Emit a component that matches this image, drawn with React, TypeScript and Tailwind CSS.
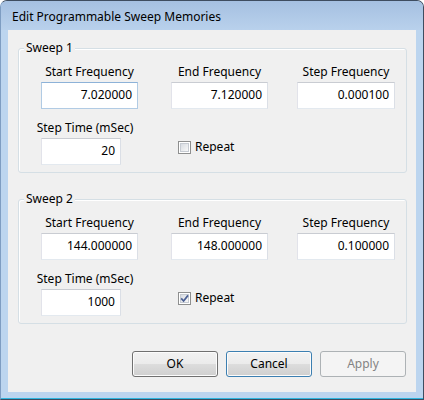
import { clsx as cn } from "clsx";

const ui = "font-['Noto_Sans','DejaVu_Sans',sans-serif] text-[12px] text-black";

function TextBox({ value, className, hot = false }: { value: string; className?: string; hot?: boolean }) {
  return (
    <div
      className={cn(
        "flex h-[27px] items-center justify-end border bg-white pr-[5px] pb-[1px] leading-[16px]",
        hot
          ? "border-[#b1cbe4] border-t-[#8db2d8]"
          : "border-[#e3e9ef] border-t-[#c9ccd2] border-l-[#e2e3ea] border-r-[#dbdfe6]",
        className
      )}
    >
      {value}
    </div>
  );
}

function CheckBox({ label, checked = false }: { label: string; checked?: boolean }) {
  return (
    <div className="flex items-center leading-[16px]">
      <div className="h-[13px] w-[13px] border border-[#8e8f8f] bg-white p-px">
        <div className="relative h-full w-full border border-[#c6cbd2] bg-linear-to-br from-[#d8dce2] to-[#f8f8f8]">
          {checked && (
            <svg viewBox="0 0 9 9" className="absolute -left-px -top-px h-[9px] w-[9px]">
              <path d="M1.2 4.4 L3.6 7 L8 1.4" fill="none" stroke="#4a5f93" strokeWidth="1.7" />
            </svg>
          )}
        </div>
      </div>
      <span className="ml-[4px]">{label}</span>
    </div>
  );
}

function Field({ label, value, className, hot }: { label: string; value: string; className?: string; hot?: boolean }) {
  return (
    <div className={className}>
      <div className="text-center leading-[16px]">{label}</div>
      <TextBox value={value} hot={hot} className="mt-[2px]" />
    </div>
  );
}

function Sweep({
  title,
  start,
  end,
  step,
  time,
  repeat,
  hot,
  className,
}: {
  title: string;
  start: string;
  end: string;
  step: string;
  time: string;
  repeat: boolean;
  hot?: boolean;
  className?: string;
}) {
  return (
    <div className={cn("relative rounded-[3px] border border-[#d5dfe5] pt-[15px] pb-[7px] shadow-[inset_1px_1px_0_#fff]", className)}>
      <span className="absolute -top-[9px] left-[5px] bg-[#f0f0f0] px-[2px] leading-[16px]">{title}</span>
      <div className="flex">
        <Field label="Start Frequency" value={start} hot={hot} className="ml-[22px] w-[97px]" />
        <Field label="End Frequency" value={end} className="ml-[33px] w-[97px]" />
        <Field label="Step Frequency" value={step} className="ml-[29px] w-[98px]" />
      </div>
      <div className="mt-[11px] flex items-start">
        <div className="ml-[14px] w-[104px]">
          <div className="text-center leading-[16px]">Step Time (mSec)</div>
          <TextBox value={time} className="ml-[8px] mt-[2px] w-[80px]" />
        </div>
        <div className="ml-[41px] mt-[19px]">
          <CheckBox label="Repeat" checked={repeat} />
        </div>
      </div>
    </div>
  );
}

function Button({ children, variant = "normal" }: { children: React.ReactNode; variant?: "normal" | "default" | "disabled" }) {
  return (
    <button
      type="button"
      className={cn(
        "h-[26px] w-[86px] rounded-[3px] border leading-[16px]",
        variant === "disabled"
          ? "border-[#adb2b5] bg-[#f4f4f4] text-[#838383]"
          : "bg-[linear-gradient(to_bottom,#f2f2f2_0%,#ebebeb_50%,#dddddd_50%,#cfcfcf_100%)] shadow-[inset_0_0_0_1px_#fcfcfc]",
        variant === "normal" && "border-[#707070]",
        variant === "default" && "border-[#3c7fb1] shadow-[inset_0_0_0_1px_#48d5fd]"
      )}
    >
      {children}
    </button>
  );
}

export default function App() {
  return (
    <div className={cn("h-[400px] w-[424px] overflow-hidden rounded-t-[7px] border border-[#3e4d60] border-l-[#7e9dc2] bg-[#bcd5ef]", ui)}>
      <div className="h-[29px] bg-linear-to-b from-[#a5c0e1] to-[#b9d1ec] pl-[11px] pt-[8px] leading-[16px]">
        Edit Programmable Sweep Memories
      </div>
      <div className="flex">
        <div className="w-[7px]" />
        <div className="h-[362px] w-[408px] bg-[#f0f0f0] pt-[18px] pl-[10px] pr-[9px]">
          <Sweep title="Sweep 1" start="7.020000" end="7.120000" step="0.000100" time="20" repeat={false} hot />
          <Sweep title="Sweep 2" start="144.000000" end="148.000000" step="0.100000" time="1000" repeat className="mt-[26px]" />
          <div className="mt-[27px] mr-[1px] flex justify-end gap-[8px]">
            <Button>OK</Button>
            <Button variant="default">Cancel</Button>
            <Button variant="disabled">Apply</Button>
          </div>
        </div>
        <div className="w-[7px]" />
      </div>
      <div className="h-[7px] border-b border-[#2fb6df]" />
    </div>
  );
}
